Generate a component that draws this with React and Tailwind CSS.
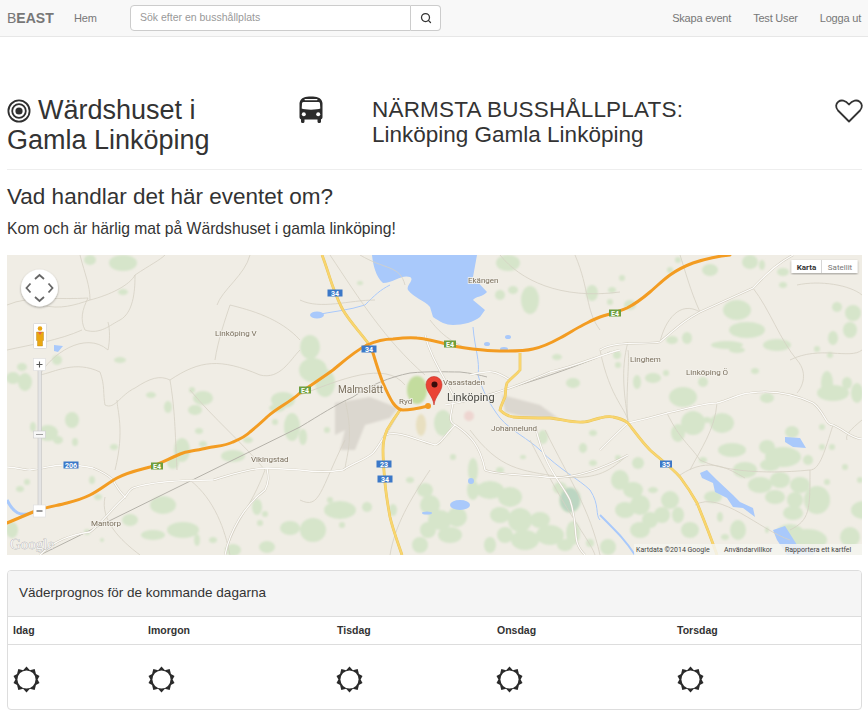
import { Search } from 'lucide-react';

// Kartdata, allt i sidkoordinater (kartan börjar på 7,255)
const greens = [
  [90,260,6,5],[123,263,14,8],[123,292,5,3],[120,360,6,3],[22,367,5,4],[13,378,7,6],[25,382,7,9],[57,360,5,5],[151,395,5,3],[168,407,4,6],
  [203,398,10,7],[195,410,7,5],[192,390,3,3],[283,400,12,8],[277,408,8,4],[292,427,8,14],[275,422,3,3],[199,431,4,3],[182,450,8,12],[173,463,6,6],
  [203,444,4,3],[233,456,12,6],[248,440,5,3],[72,420,7,8],[48,433,10,8],[33,427,3,5],[75,442,3,4],[58,440,5,4],[114,447,4,3],[92,480,3,4],
  [27,482,3,3],[20,489,4,3],[98,497,4,3],[163,505,13,9],[183,530,16,8],[257,507,5,8],[265,514,3,3],[260,523,3,3],[290,528,10,7],[267,547,8,6],
  [153,535,12,5],[130,520,8,6],[197,540,3,6],[233,550,8,6],[213,540,4,3],[87,532,3,3],[102,540,2,2],[12,530,6,8],
  [310,347,10,12],[313,370,14,12],[325,383,10,14],[303,437,4,8],[327,430,3,3],[508,263,12,8],[530,300,9,14],[513,290,5,4],[500,295,5,5],[592,293,6,8],
  [360,283,3,2],[573,383,7,5],[557,357,5,3],[593,433,4,3],[583,448,4,5],[543,437,5,7],[560,488,7,6],[593,463,4,3],[500,470,4,3],[453,457,3,3],
  [523,457,3,2],[473,470,5,12],[490,490,14,9],[510,497,12,10],[500,515,10,8],[520,520,12,12],[540,520,10,8],[550,535,14,10],[525,540,14,10],[505,535,8,8],
  [565,545,8,6],[490,545,6,8],[473,490,6,10],[425,490,8,7],[430,505,10,10],[440,520,12,10],[428,530,8,8],[450,535,12,8],[420,545,8,8],[457,517,10,10],
  [340,510,16,9],[367,507,5,5],[330,500,3,3],[342,525,3,3],[313,530,13,12],[573,533,7,12],[590,543,4,4],[410,480,4,3],[393,510,4,6],[443,423,9,13],
  [630,305,6,5],[612,290,4,3],[610,302,3,3],[622,278,3,3],[670,270,3,3],[678,260,3,3],[710,270,8,6],[750,262,8,7],[762,265,3,5],[783,272,6,4],
  [783,285,4,3],[837,307,5,5],[853,313,8,8],[850,330,7,8],[833,338,5,7],[817,349,3,3],[830,355,3,3],[737,310,14,10],[747,330,18,8],[727,345,16,4],
  [737,350,8,3],[687,338,5,6],[672,340,6,4],[777,345,14,6],[755,371,4,3],[653,378,8,5],[637,382,4,7],[666,373,3,3],[618,365,3,3],[617,355,4,4],
  [703,382,5,5],[683,397,14,10],[767,398,7,5],[827,383,6,12],[833,393,16,8],[857,393,6,10],[847,383,5,6],[693,423,12,12],[678,433,7,9],[722,423,12,10],
  [707,420,4,3],[822,427,3,3],[792,432,7,6],[732,450,14,7],[767,447,8,7],[783,457,18,10],[808,460,5,5],[822,447,3,3],[832,447,3,3],[845,467,3,3],
  [703,460,4,3],[638,463,6,6],[618,458,3,3],[745,470,12,8],[770,465,10,6],[760,485,12,8],[780,480,10,8],[800,485,10,8],[775,497,10,7],[795,500,8,8],
  [817,500,13,14],[793,513,10,7],[827,482,3,3],[860,480,3,3],[863,510,12,9],[713,497,9,6],[620,480,9,10],[633,490,10,8],[640,505,10,10],[625,510,10,8],
  [650,520,8,8],[640,530,10,8],[670,500,9,9],[662,515,8,8],[678,515,6,8],[653,490,5,3],[690,530,9,8],[720,517,3,5],[725,537,4,3],[738,530,8,10],
  [790,533,14,9],[807,540,20,11],[850,537,10,10],[608,547,8,8],[767,530,2,3],[570,500,11,13],
];

const thinRoads = [
  'M80 255C85 275 90 285 90 300C75 305 60 310 42 305M90 300C110 295 130 285 135 275C150 265 160 260 165 255',
  'M7 305C30 295 60 300 88 298C82 310 80 320 85 330C100 335 110 325 120 320C135 312 135 285 135 275',
  'M7 350C30 345 60 340 82 330M108 322C110 330 110 340 108 350C85 330 50 355 40 375C55 372 75 360 100 372C105 385 103 395 105 405C115 410 120 395 135 388C150 378 160 375 170 380',
  'M170 380C175 410 175 430 177 470M170 380C200 360 220 358 260 375C280 380 290 360 300 350M215 360C218 340 225 320 230 305C250 310 280 318 300 340',
  'M217 305C222 290 245 275 250 255M115 470C125 430 117 410 117 400M190 390C215 420 240 440 265 470M265 470C250 510 235 520 225 555',
  'M190 480C215 500 225 530 230 555M105 497C100 520 120 540 140 555M330 255C360 300 385 340 425 375M300 300C320 310 350 300 375 300M405 385C385 360 340 380 300 395',
  'M345 440C320 490 320 510 300 500M345 400C355 440 345 460 345 470M430 470C410 500 395 525 390 555M470 430C500 470 520 470 560 477C600 480 610 470 628 455',
  'M545 430C570 480 590 510 600 555M530 440C570 520 590 540 595 555M600 350C610 400 628 410 628 423M628 342C620 370 625 400 628 420M500 255C520 280 560 300 620 292',
  'M575 255C590 290 585 310 600 330M660 342C665 320 680 300 700 312M700 312C690 290 685 270 680 255M753 288C770 310 780 340 797 360C810 375 800 390 797 393',
  'M790 360C820 345 850 360 862 350M797 285C820 280 850 285 862 295M667 413C680 440 690 445 700 460M700 460C720 470 760 475 810 470C810 510 810 520 790 530',
  'M680 475C710 455 730 470 745 478M717 403C715 430 700 450 690 470M833 425C825 450 820 470 810 470M628 350C630 360 625 400 628 423M862 420C850 430 845 435 847 440',
  'M695 505C720 490 760 530 790 540M360 255C385 270 400 265 405 285M430 320C445 340 460 345 470 350',
];

const whiteRoads = [
  'M600 350C615 340 650 345 660 342C680 325 685 320 700 312L753 288C770 270 780 262 793 255',
  'M600 450C610 440 620 430 628 423C650 418 660 415 667 413C690 408 705 403 717 403C730 400 740 393 750 393C770 390 790 392 813 403C825 412 825 425 833 425C845 430 850 438 862 439',
  'M7 467C20 468 25 470 30 470C45 468 55 465 63 465C75 465 85 466 93 468C103 472 108 475 113 480C117 488 120 492 125 497C130 490 130 490 133 488C150 482 180 480 213 480C230 475 250 468 267 468L300 470C315 472 330 472 343 470C355 462 365 460 373 453C380 445 385 435 400 410',
  'M40 555C55 540 70 535 90 532C100 525 115 505 125 497M225 555C230 530 245 505 265 490C270 480 268 475 267 468',
  'M425 335C430 355 440 370 453 395C455 410 445 420 455 425C445 435 440 445 435 445C415 440 400 430 385 435M455 425C470 435 480 445 485 470C495 475 530 475 545 477C570 480 600 470 628 455',
  'M535 425C545 470 560 480 570 500C580 530 570 540 585 555M445 405C480 400 520 385 550 372C580 365 600 355 620 350M470 375C490 370 495 370 510 380',
];

const rivers = [
  'M315 315C330 312 350 310 365 305C375 295 380 290 390 285',
  'M473 327C475 350 480 360 478 375C482 390 490 405 500 418C510 430 530 440 540 450C560 470 580 480 590 490C600 505 595 515 600 520',
];

const e4 = 'M7 523L33 512C45 507 56 506 67 503C75 501 82 499 90 495C100 490 108 483 117 478C128 472 139 470 150 467C162 463 172 457 183 453C190 451 199 450 207 448C216 446 225 446 233 442C240 439 245 437 250 432C256 427 262 422 267 417C278 407 289 403 300 393C311 385 322 378 333 370C345 360 355 351 367 345C376 341 384 339 393 339C401 338 409 337 417 338C428 339 439 342 450 345C461 348 472 349 483 350C491 351 499 351 507 351C516 351 525 351 533 349C543 347 551 343 560 338C568 334 575 329 583 325C589 322 594 319 600 317C609 314 618 312 627 308C635 304 643 298 650 292C657 286 663 280 670 275C677 270 685 266 693 263C705 259 717 256 730 255';

const yellowRoads = [
  'M322 255C326 265 329 276 333 287C336 295 339 303 343 310C350 322 360 332 368 343',
  'M400 410C395 417 391 423 387 430C384 437 383 443 383 450C383 461 384 472 385 483C386 494 388 506 390 517C393 530 398 543 402 555',
  'M520 353C520 358 520 364 520 370C516 375 511 378 507 383C505 388 506 392 505 397C503 402 501 405 500 410C504 414 508 416 513 417C525 418 538 418 550 418C561 419 572 423 583 422C589 422 594 419 600 418C604 417 609 416 613 417C619 418 624 420 628 423C635 432 642 442 650 450C660 459 671 467 680 477C686 485 692 494 697 503C704 520 711 538 717 555',
];

const Shield = ({ x, y, label, color = '#3b78c8', w = 15 }) => (
  <g>
    <rect x={x - w / 2} y={y - 3.5} width={w} height={7} fill={color} />
    <text x={x} y={y + 2.7} textAnchor="middle" fontSize="7" fontWeight="700" fill="#fff" fontFamily="Roboto, sans-serif">{label}</text>
  </g>
);

const Place = ({ x, y, size = 8, children, color = '#7a6f5d' }) => (
  <text x={x} y={y} fontSize={size} fill={color} fontFamily="Roboto, sans-serif" stroke="#f4f2ec" strokeWidth="1.6" paintOrder="stroke" filter="url(#softer)">{children}</text>
);

const MapCanvas = () => (
  <svg viewBox="7 255 855 300" width="855" height="300" className="block">
    <defs>
      <filter id="soft"><feGaussianBlur stdDeviation="0.9" /></filter>
      <filter id="softer"><feGaussianBlur stdDeviation="0.35" /></filter>
      <filter id="shadow"><feDropShadow dx="0" dy="1" stdDeviation="1" floodOpacity="0.35" /></filter>
    </defs>
    <rect x="7" y="255" width="855" height="300" fill="#f0ede5" />

    <g filter="url(#soft)" fill="#d6e5ca">
      {greens.map(([x, y, rx, ry], i) => (
        <ellipse key={i} cx={x} cy={y} rx={rx} ry={ry} />
      ))}
      <ellipse cx="417" cy="390" rx="10" ry="14" fill="#c3dc9e" />
      <ellipse cx="570" cy="500" rx="10" ry="12" fill="#bcd6c2" />
      <path d="M335 403L370 397L398 408L390 418L365 425L355 450L340 450L345 430L335 435Z" fill="#dbd7cf" />
      <path d="M502 395L540 405L558 418L520 416L505 412Z" fill="#dbd7cf" />
      <ellipse cx="421" cy="425" rx="5" ry="11" fill="#e8dfc0" />
      <ellipse cx="469" cy="416" rx="5" ry="5" fill="#eed5d0" />
    </g>

    <g fill="#a9c9fb" filter="url(#softer)">
      <path d="M372 255C373 265 376 277 383 283C393 283 402 274 410 277C415 280 406 285 408 290C414 298 424 300 430 307L433 317C440 322 446 325 453 325C463 325 474 322 480 317L485 310L473 300C476 296 483 297 487 292L473 277L477 255Z" />
      <path d="M700 473L707 470L717 480L733 495L740 502L753 508L755 517L743 508L733 507L727 498L715 492L713 483L702 478Z" />
      <path d="M785 437L800 438L806 448L793 447L785 442Z" />
      <path d="M773 530L785 526L792 537L797 545L817 550L813 555L787 555L777 540Z" />
      <ellipse cx="460" cy="505" rx="10" ry="5" />
      <ellipse cx="317" cy="315" rx="7" ry="3.5" />
      <path d="M54 345L63 346L58 352L54 351Z" />
      <ellipse cx="508" cy="337" rx="3" ry="2" />
      <ellipse cx="487" cy="344" rx="3" ry="2" />
      <ellipse cx="504" cy="349" rx="4" ry="2" />
      <ellipse cx="471" cy="481" rx="3" ry="3" />
      <ellipse cx="427" cy="513" rx="5" ry="1.5" />
    </g>
    <g fill="none" stroke="#a9c9fb" filter="url(#softer)">
      {rivers.map((d) => <path key={d} d={d} strokeWidth="1" />)}
      <path d="M7 500C13 512 20 518 33 512" strokeWidth="3" />
      <path d="M600 515C620 535 625 540 635 555" strokeWidth="2" />
    </g>

    <g fill="none" stroke="#d6d1c4" strokeWidth="0.8" filter="url(#softer)">
      {thinRoads.map((d) => <path key={d} d={d} />)}
    </g>
    <g fill="none" filter="url(#softer)">
      <path d="M40 555L300 427C320 415 335 405 353 397C370 385 390 377 410 373C430 371 445 372 460 372C470 373 480 375 487 377M487 395C520 385 570 370 610 352" stroke="#b5b2aa" strokeWidth="1" />
      {whiteRoads.map((d) => <path key={d} d={d} stroke="#cfcabc" strokeWidth="2.2" />)}
      {whiteRoads.map((d) => <path key={d} d={d} stroke="#fdfcfa" strokeWidth="1.3" />)}
      {yellowRoads.map((d) => <path key={d} d={d} stroke="#e8c65c" strokeWidth="2.8" />)}
      {yellowRoads.map((d) => <path key={d} d={d} stroke="#f9d56e" strokeWidth="2" />)}
      <path d={e4} stroke="#f39c21" strokeWidth="3" strokeLinecap="round" />
      <path d="M367 345C369 348 371 350 373 353C376 363 379 373 383 383C386 390 389 397 393 403C396 407 399 410 403 410C411 410 420 408 428 406" stroke="#f39c21" strokeWidth="3" strokeLinecap="round" />
    </g>
    <circle cx="428" cy="406" r="3" fill="#f39c21" />

    <Shield x={335} y={293} label="34" />
    <Shield x={369} y={349} label="34" />
    <Shield x={384} y={464} label="23" />
    <Shield x={385} y={479} label="34" />
    <Shield x={666} y={464} label="35" w={12} />
    <Shield x={71} y={465} label="206" />
    <Shield x={157} y={466} label="E4" color="#6d9e3e" w={12} />
    <Shield x={305} y={390} label="E4" color="#6d9e3e" w={12} />
    <Shield x={450} y={344} label="E4" color="#6d9e3e" w={12} />
    <Shield x={615} y={313} label="E4" color="#6d9e3e" w={12} />

    <Place x={215} y={336}>Linköping V</Place>
    <Place x={251} y={462}>Vikingstad</Place>
    <Place x={91} y={526}>Mantorp</Place>
    <Place x={338} y={393} size={10}>Malmslätt</Place>
    <Place x={399} y={404}>Ryd</Place>
    <Place x={443} y={385}>Vasastaden</Place>
    <Place x={447} y={401} size={11} color="#4a4a44">Linköping</Place>
    <Place x={491} y={431}>Johannelund</Place>
    <Place x={468} y={283}>Ekängen</Place>
    <Place x={630} y={362}>Linghem</Place>
    <Place x={686} y={375}>Linköping Ö</Place>

    {/* Kartnål */}
    <path d="M434 405C433 396 426 392 426 384.5A8 8 0 0 1 442 384.5C442 392 435 396 434 405Z" fill="#ea4335" stroke="#c5302a" strokeWidth="0.6" />
    <circle cx="434.5" cy="384.5" r="3" fill="#3a0d0b" />

    {/* Panorering */}
    <g filter="url(#shadow)">
      <circle cx="39.5" cy="288" r="18.5" fill="#fff" />
    </g>
    <path d="M35 279L39.5 275L44 279M35 297L39.5 301L44 297M30.5 283.5L26.5 288L30.5 292.5M48.5 283.5L52.5 288L48.5 292.5" fill="none" stroke="#666" strokeWidth="1.8" />

    {/* Gubbe och zoom */}
    <rect x="33.5" y="323.5" width="13" height="25" rx="1" fill="#fff" stroke="#ccc" strokeWidth="0.6" />
    <circle cx="40" cy="328.5" r="2.3" fill="#e8a512" />
    <path d="M36.5 332H43.5V340.5H42.5V346H37.5V340.5H36.5Z" fill="#eaa712" stroke="#b37d0a" strokeWidth="0.4" />
    <path d="M38 332H42L40 335Z" fill="#e5614d" />
    <rect x="38" y="368" width="3.5" height="140" fill="#e4e4e4" stroke="#bbb" strokeWidth="0.5" />
    <rect x="33.5" y="358.5" width="12" height="12" fill="#fff" stroke="#ddd" strokeWidth="0.6" />
    <path d="M36.5 364.5H42.5M39.5 361.5V367.5" stroke="#555" strokeWidth="1.1" />
    <rect x="33.5" y="431" width="12" height="7" fill="#f7f7f7" stroke="#ccc" strokeWidth="0.6" />
    <path d="M36 434.5H43" stroke="#888" strokeWidth="0.8" />
    <rect x="33.5" y="505" width="12" height="12" fill="#fff" stroke="#ddd" strokeWidth="0.6" />
    <path d="M36.5 511H42.5" stroke="#555" strokeWidth="1.2" />

    <text x="10" y="549" fontSize="15" fontFamily="Liberation Serif, serif" fill="#f4f4f4" stroke="#9a9a9a" strokeWidth="0.5" paintOrder="stroke">Google</text>

    {/* Karttyp */}
    <g filter="url(#shadow)">
      <rect x="791.5" y="260" width="66" height="13" fill="#fff" />
    </g>
    <rect x="821" y="260" width="0.8" height="13" fill="#ccc" />
    <text x="806.5" y="270" textAnchor="middle" fontSize="8" fontWeight="700" fill="#333" fontFamily="Roboto, sans-serif">Karta</text>
    <text x="840" y="270" textAnchor="middle" fontSize="8" fill="#777" fontFamily="Roboto, sans-serif">Satellit</text>

    {/* Attribution */}
    <rect x="634" y="544" width="228" height="11" fill="#f5f4f0" fillOpacity="0.85" />
    <g fontSize="7" fill="#444" fontFamily="Roboto, sans-serif">
      <text x="636" y="552">Kartdata ©2014 Google</text>
      <text x="724" y="552">Användarvillkor</text>
      <text x="785" y="552">Rapportera ett kartfel</text>
    </g>
  </svg>
);

const TargetIcon = () => (
  <svg viewBox="0 0 24 24" className="w-[24px] h-[24px] shrink-0" fill="none" stroke="#2f2f2f">
    <circle cx="12" cy="12" r="10.6" strokeWidth="1.8" />
    <circle cx="12" cy="12" r="6.8" strokeWidth="1.8" />
    <circle cx="12" cy="12" r="3.6" fill="#2f2f2f" strokeWidth="0" />
  </svg>
);

const BusIcon = () => (
  <svg viewBox="0 0 24 28" className="w-[24px] h-[28px]">
    <path d="M5 1.5C8 0.2 16 0.2 19 1.5C21.5 2.5 23 4 23.5 7V21C23.5 22 23 23 22 23.2V25.5C22 27.5 18.5 27.5 18.5 25.5V23.5H5.5V25.5C5.5 27.5 2 27.5 2 25.5V23.2C1 23 0.5 22 0.5 21V7C1 4 2.5 2.5 5 1.5Z" fill="#2b2b2b" />
    <path d="M6 3H18C18.7 3 18.7 4.3 18 4.3H6C5.3 4.3 5.3 3 6 3Z" fill="#fff" />
    <path d="M4.5 6H19.5C20.8 6 21 7 21 8L21.3 12.5C19 14 5 14 2.7 12.5L3 8C3 7 3.2 6 4.5 6Z" fill="#fff" />
    <circle cx="4.8" cy="18.3" r="2" fill="#fff" />
    <circle cx="19.2" cy="18.3" r="2" fill="#fff" />
  </svg>
);

const HeartIcon = () => (
  <svg viewBox="0 0 28 24" className="w-[28px] h-[24px]" fill="none" stroke="#333" strokeWidth="1.8" strokeLinejoin="round">
    <path d="M14 22.5L3 11.5C0.2 8.5 0.8 4.5 3.3 2.7C6 0.7 10.5 1 14 5.5C17.5 1 22 0.7 24.7 2.7C27.2 4.5 27.8 8.5 25 11.5Z" />
  </svg>
);

const SunIcon = () => (
  <svg viewBox="0 0 28 28" className="w-[27px] h-[27px]">
    <path d="M14 0.5L17.5 4.5L22.5 3.2L23.8 8.2L27.5 10.3L25.5 14L27.5 17.7L23.8 19.8L22.5 24.8L17.5 23.5L14 27.5L10.5 23.5L5.5 24.8L4.2 19.8L0.5 17.7L2.5 14L0.5 10.3L4.2 8.2L5.5 3.2L10.5 4.5Z" fill="#2b2b2b" />
    <circle cx="14" cy="14" r="9.4" fill="#fff" />
  </svg>
);

const days = ['Idag', 'Imorgon', 'Tisdag', 'Onsdag', 'Torsdag'];

const App = () => {
  return (
    <div className="bg-white text-[#333] font-['Liberation_Sans',Arial,sans-serif]">
      {/* Navbar */}
      <div className="h-[37px] bg-[#f8f8f8] border-b border-[#e7e7e7] flex items-center pl-[7px] pr-[7px] text-[11px] tracking-[-0.2px] text-[#777]">
        <div className="w-[67px] text-[14px] tracking-normal font-bold text-[#777]"><span className="font-normal">B</span>EAST</div>
        <div className="w-[56px]">Hem</div>
        <div className="flex h-[26px] w-[311px]">
          <div className="flex-1 bg-white border border-[#ccc] rounded-l-[4px] pl-[9px] flex items-center text-[10.5px] tracking-normal text-[#999]">Sök efter en busshållplats</div>
          <div className="w-[30px] bg-white border border-l-0 border-[#ccc] rounded-r-[4px] flex items-center justify-center">
            <Search size={12} strokeWidth={2.5} color="#333" />
          </div>
        </div>
        <div className="ml-auto flex gap-[22px]">
          <span>Skapa event</span>
          <span>Test User</span>
          <span>Logga ut</span>
        </div>
      </div>

      <div className="px-[7px]">
        {/* Rubrikrad */}
        <div className="flex pt-[58px] pb-[14px] border-b border-[#eee] w-[855px]">
          <h1 className="w-[292px] text-[27px] leading-[30px]">
            <span className="inline-block align-[-4px] mr-[7px]"><TargetIcon /></span>
            Wärdshuset i<br />Gamla Linköping
          </h1>
          <div className="w-[73px] pt-[1px]"><BusIcon /></div>
          <div className="flex-1 text-[22.5px] leading-[25px] pt-[2px]">
            <span className="tracking-[0.2px]">NÄRMSTA BUSSHÅLLPLATS:</span><br />Linköping Gamla Linköping
          </div>
          <div className="pt-[4px] mr-[-1px]"><HeartIcon /></div>
        </div>

        <h2 className="text-[22.5px] leading-[26px] mt-[14px]">Vad handlar det här eventet om?</h2>
        <p className="text-[15.7px] leading-[22px] mt-[8px] mb-[15px]">Kom och är härlig mat på Wärdshuset i gamla linköping!</p>

        <MapCanvas />

        {/* Väderpanel */}
        <div className="mt-[15px] mb-[7px] w-[855px] border border-[#ddd] rounded-[4px] overflow-hidden">
          <div className="h-[46px] bg-[#f5f5f5] border-b border-[#ddd] flex items-center pl-[11px] text-[13.5px]">Väderprognos för de kommande dagarna</div>
          <div className="grid grid-cols-[135px_189px_160px_180px_1fr] h-[28px] border-b border-[#ddd] items-center pl-[5px] text-[10.5px] font-bold">
            {days.map((d) => <div key={d}>{d}</div>)}
          </div>
          <div className="grid grid-cols-[135px_188px_160px_181px_1fr] h-[64px] items-center pl-[5px] pt-[5px]">
            {days.map((d) => <div key={d} className="flex"><SunIcon /></div>)}
          </div>
        </div>
      </div>
    </div>
  );
};

export default App;
